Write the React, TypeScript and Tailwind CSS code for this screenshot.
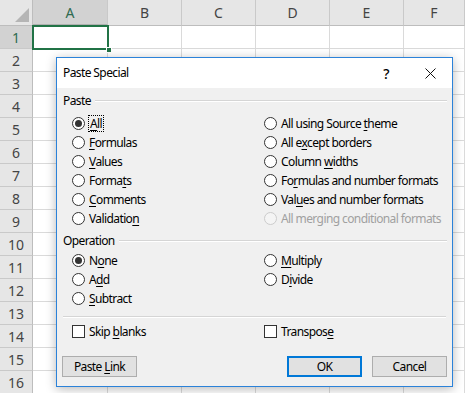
import React from "react";

const ui = "font-['Noto_Sans','Open_Sans',sans-serif]";

const rows = Array.from({ length: 16 }, (_, i) => i + 1);
const letters = ["A", "B", "C", "D", "E", "F"];

const Key = ({ text, k }: { text: string; k: number }) => (
  <span className="whitespace-pre">
    {text.slice(0, k)}
    <span className="underline underline-offset-2">{text.charAt(k)}</span>
    {text.slice(k + 1)}
  </span>
);

type Opt = { text: string; k: number; checked?: boolean; disabled?: boolean; focus?: boolean };

const Radio = ({ text, k, checked, disabled, focus }: Opt) => (
  <div className={`h-[19px] flex items-center gap-[4px] ${disabled ? "text-[#a0a0a0]" : "text-black"}`}>
    <span
      className={`w-[13px] h-[13px] rounded-full border flex items-center justify-center shrink-0 ${
        disabled ? "border-[#cccccc] bg-[#f4f4f4]" : "border-[#333333] bg-white"
      }`}
    >
      {checked && <span className="w-[7px] h-[7px] rounded-full bg-[#333333]" />}
    </span>
    <span className={`leading-[15px] whitespace-nowrap ${focus ? "outline outline-1 outline-dotted outline-black px-[1px]" : ""}`}>
      {disabled ? text : <Key text={text} k={k} />}
    </span>
  </div>
);

const Check = ({ text, k }: { text: string; k: number }) => (
  <div className="h-[19px] flex items-center gap-[4px]">
    <span className="w-[13px] h-[13px] border border-[#333333] bg-white shrink-0" />
    <span className="whitespace-nowrap">
      <Key text={text} k={k} />
    </span>
  </div>
);

const GroupLabel = ({ text }: { text: string }) => (
  <div className="h-[16px] flex items-center pl-[6px] pr-[5px]">
    <span className="text-black">{text}</span>
    <span className="flex-1 ml-[4px] h-[2px] border-t border-[#d5d5d5] border-b border-b-white" />
  </div>
);

const pasteOpts: [Opt, Opt][] = [
  [{ text: "All", k: 0, checked: true, focus: true }, { text: "All using Source theme", k: 17 }],
  [{ text: "Formulas", k: 0 }, { text: "All except borders", k: 5 }],
  [{ text: "Values", k: 0 }, { text: "Column widths", k: 7 }],
  [{ text: "Formats", k: 5 }, { text: "Formulas and number formats", k: 2 }],
  [{ text: "Comments", k: 0 }, { text: "Values and number formats", k: 3 }],
  [{ text: "Validation", k: 9 }, { text: "All merging conditional formats", k: 0, disabled: true }],
];

const opOpts: [Opt, Opt | null][] = [
  [{ text: "None", k: 1, checked: true }, { text: "Multiply", k: 0 }],
  [{ text: "Add", k: 1 }, { text: "Divide", k: 1 }],
  [{ text: "Subtract", k: 0 }, null],
];

const Btn = ({ children, primary }: { children: React.ReactNode; primary?: boolean }) => (
  <button
    className={`w-[75px] h-[21px] bg-[#e1e1e1] text-black text-[12px] flex items-center justify-center ${
      primary ? "border-2 border-[#0078d7]" : "border border-[#adadad]"
    }`}
  >
    {children}
  </button>
);

export default function App() {
  return (
    <div className={`relative w-[465px] h-[393px] overflow-hidden bg-white ${ui}`}>
      {/* sheet */}
      <div className="grid grid-cols-[33px_75px_74px_74px_74px_74px_1fr] h-[26px]">
        <div className="bg-[#e6e6e6] border-r border-b border-[#bdbdbd] flex items-end justify-end pr-[3px] pb-[3px]">
          <svg width="14" height="14" viewBox="0 0 14 14">
            <path d="M14 0 L14 14 L0 14 Z" fill="#b5b5b5" />
          </svg>
        </div>
        {letters.map((l, i) => (
          <div
            key={l}
            className={`border-r border-[#c9c9c9] flex items-center justify-center text-[14px] ${
              i === 0 ? "bg-[#d2d2d2] text-[#2f6b50] border-b-2 border-b-[#b0b0b0]" : "bg-[#e6e6e6] text-[#444444] border-b border-b-[#bdbdbd]"
            }`}
          >
            {l}
          </div>
        ))}
      </div>
      {rows.map((r) => (
        <div key={r} className="grid grid-cols-[33px_75px_74px_74px_74px_74px_1fr] h-[23px]">
          <div
            className={`border-b border-[#c9c9c9] border-r border-r-[#bdbdbd] flex items-center justify-center text-[14px] ${
              r === 1 ? "bg-[#d2d2d2] text-[#2f6b50]" : "bg-[#e6e6e6] text-[#444444]"
            }`}
          >
            {r}
          </div>
          {letters.map((l) => (
            <div key={l} className="border-r border-b border-[#dadada]" />
          ))}
        </div>
      ))}

      {/* selected cell A1 */}
      <div className="absolute left-[32px] top-[25px] w-[77px] h-[25px] border-2 border-[#217346]" />
      <div className="absolute left-[106px] top-[47px] w-[6px] h-[6px] bg-[#217346] border border-white" />

      {/* dialog */}
      <div className="absolute left-[56px] top-[57px] w-[397px] h-[330px] border border-[#2b82d9] bg-[#f0f0f0] flex flex-col shadow-[0_2px_10px_rgba(0,0,0,0.28)] text-[12px] tracking-[-0.6px] text-black">
        <div className="h-[30px] bg-white flex items-center shrink-0">
          <span className="pl-[6px] text-[12px]">Paste Special</span>
          <span className="ml-auto w-[44px] h-full flex items-center justify-center text-[14px] font-medium">?</span>
          <span className="w-[44px] h-full flex items-center justify-center">
            <svg width="11" height="11" viewBox="0 0 11 11">
              <path d="M0.5 0.5 L10.5 10.5 M10.5 0.5 L0.5 10.5" stroke="#111" strokeWidth="1" />
            </svg>
          </span>
        </div>

        <div className="mt-[5px]">
          <GroupLabel text="Paste" />
        </div>
        <div className="mt-[5px] pl-[15px] grid grid-cols-[192px_1fr]">
          {pasteOpts.map(([a, b]) => (
            <React.Fragment key={a.text}>
              <Radio {...a} />
              <Radio {...b} />
            </React.Fragment>
          ))}
        </div>

        <div className="mt-[5px]">
          <GroupLabel text="Operation" />
        </div>
        <div className="mt-[2px] pl-[15px] grid grid-cols-[192px_1fr]">
          {opOpts.map(([a, b]) => (
            <React.Fragment key={a.text}>
              <Radio {...a} />
              {b ? <Radio {...b} /> : <div className="h-[19px]" />}
            </React.Fragment>
          ))}
        </div>

        <div className="mt-[8px] mx-[6px] h-[2px] border-t border-[#d5d5d5] border-b border-b-white" />

        <div className="mt-[4px] pl-[15px] grid grid-cols-[192px_1fr]">
          <Check text="Skip blanks" k={5} />
          <Check text="Transpose" k={8} />
        </div>

        <div className="mt-[15px] flex items-center pl-[5px] pr-[5px]">
          <Btn>
            <Key text="Paste Link" k={6} />
          </Btn>
          <div className="ml-auto flex gap-[10px]">
            <Btn primary>OK</Btn>
            <Btn>Cancel</Btn>
          </div>
        </div>
      </div>
    </div>
  );
}
